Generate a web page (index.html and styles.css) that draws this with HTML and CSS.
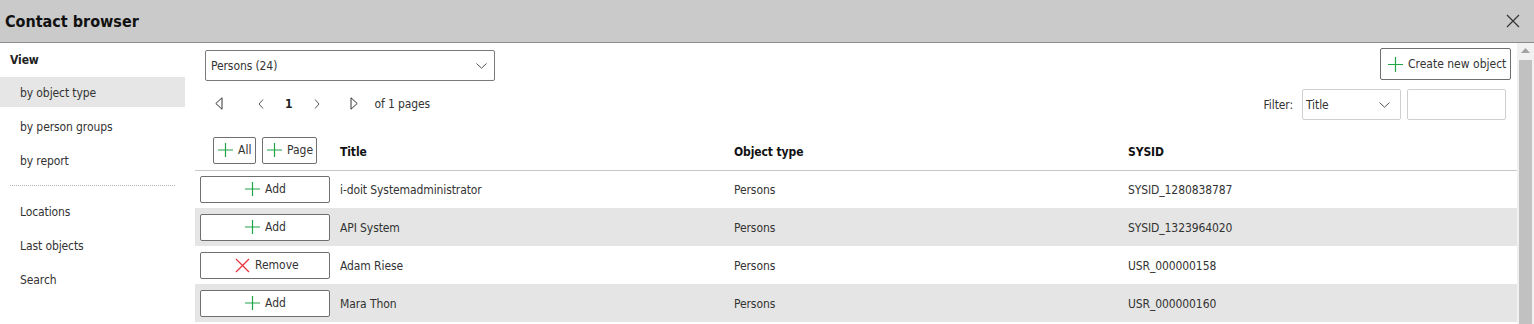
FILE: index.html
```html
<!DOCTYPE html>
<html lang="en">
<head>
<meta charset="utf-8">
<title>Contact browser</title>
<link rel="stylesheet" href="styles.css">
</head>
<body>
<div class="dialog">
  <header class="titlebar">
    <h1 class="title">Contact browser</h1>
    <span class="close">
      <svg width="14" height="14" viewBox="0 0 14 14"><path d="M1 1 L13 13 M13 1 L1 13" stroke="#333" stroke-width="1.2" fill="none"/></svg>
    </span>
  </header>
  <div class="content">
    <nav class="sidebar">
      <div class="side-head">View</div>
      <div class="side-item active">by object type</div>
      <div class="side-item">by person groups</div>
      <div class="side-item">by report</div>
      <div class="side-sep"></div>
      <div class="side-item">Locations</div>
      <div class="side-item">Last objects</div>
      <div class="side-item">Search</div>
    </nav>
    <main class="main">
      <div class="toolbar">
        <div class="select type-select">
          <span>Persons (24)</span>
          <svg class="chev" width="11" height="6" viewBox="0 0 11 6"><path d="M0.5 0.5 L5.5 5.2 L10.5 0.5" stroke="#555" stroke-width="1" fill="none"/></svg>
        </div>
        <button class="btn create-btn">
          <svg class="plus" width="15" height="15" viewBox="0 0 15 15"><path d="M7.5 0 V15 M0 7.5 H15" stroke="#1ea446" stroke-width="1.2"/></svg>
          <span>Create new object</span>
        </button>
      </div>
      <div class="pager-row">
        <div class="pager">
          <svg class="pg-first" width="8" height="13" viewBox="0 0 8 13"><path d="M7 0.8 V12.2 L0.8 6.5 Z" stroke="#333" stroke-width="1" fill="none"/></svg>
          <svg class="pg-prev" width="6" height="10" viewBox="0 0 6 10"><path d="M5 0.5 L1 5 L5 9.5" stroke="#555" stroke-width="1" fill="none"/></svg>
          <span class="pg-num">1</span>
          <svg class="pg-next" width="6" height="10" viewBox="0 0 6 10"><path d="M1 0.5 L5 5 L1 9.5" stroke="#555" stroke-width="1" fill="none"/></svg>
          <svg class="pg-last" width="8" height="13" viewBox="0 0 8 13"><path d="M1 0.8 V12.2 L7.2 6.5 Z" stroke="#333" stroke-width="1" fill="none"/></svg>
          <span class="pg-text">of 1 pages</span>
        </div>
        <div class="filter">
          <span class="filter-label">Filter:</span>
          <div class="select filter-select">
            <span>Title</span>
            <svg class="chev" width="11" height="6" viewBox="0 0 11 6"><path d="M0.5 0.5 L5.5 5.2 L10.5 0.5" stroke="#555" stroke-width="1" fill="none"/></svg>
          </div>
          <div class="input filter-input"></div>
        </div>
      </div>
      <table class="grid">
        <colgroup><col class="c-act"><col><col><col></colgroup>
        <thead>
          <tr>
            <th class="act-head">
              <div class="head-btns">
                <button class="btn small-btn btn-all"><svg class="plus" width="15" height="14" viewBox="0 0 15 14"><path d="M7.5 0 V14 M0 7 H15" stroke="#1ea446" stroke-width="1.2"/></svg><span>All</span></button>
                <button class="btn small-btn btn-page"><svg class="plus" width="15" height="14" viewBox="0 0 15 14"><path d="M7.5 0 V14 M0 7 H15" stroke="#1ea446" stroke-width="1.2"/></svg><span>Page</span></button>
              </div>
            </th>
            <th>Title</th>
            <th>Object type</th>
            <th>SYSID</th>
          </tr>
        </thead>
        <tbody>
          <tr>
            <td class="act"><button class="btn row-btn"><svg class="plus" width="15" height="14" viewBox="0 0 15 14"><path d="M7.5 0 V14 M0 7 H15" stroke="#1ea446" stroke-width="1.2"/></svg><span>Add</span></button></td>
            <td>i-doit Systemadministrator</td>
            <td>Persons</td>
            <td>SYSID_1280838787</td>
          </tr>
          <tr class="alt">
            <td class="act"><button class="btn row-btn"><svg class="plus" width="15" height="14" viewBox="0 0 15 14"><path d="M7.5 0 V14 M0 7 H15" stroke="#1ea446" stroke-width="1.2"/></svg><span>Add</span></button></td>
            <td>API System</td>
            <td>Persons</td>
            <td>SYSID_1323964020</td>
          </tr>
          <tr>
            <td class="act"><button class="btn row-btn remove-btn"><svg class="cross" width="15" height="15" viewBox="0 0 15 15"><path d="M1 1 L14 14 M14 1 L1 14" stroke="#e8303a" stroke-width="1.2"/></svg><span>Remove</span></button></td>
            <td>Adam Riese</td>
            <td>Persons</td>
            <td>USR_000000158</td>
          </tr>
          <tr class="alt">
            <td class="act"><button class="btn row-btn"><svg class="plus" width="15" height="14" viewBox="0 0 15 14"><path d="M7.5 0 V14 M0 7 H15" stroke="#1ea446" stroke-width="1.2"/></svg><span>Add</span></button></td>
            <td>Mara Thon</td>
            <td>Persons</td>
            <td>USR_000000160</td>
          </tr>
        </tbody>
      </table>
    </main>
    <div class="scrollbar">
      <svg class="sb-up" width="9" height="5" viewBox="0 0 9 5"><path d="M0 5 L4.5 0 L9 5 Z" fill="#a3a3a3"/></svg>
      <div class="sb-thumb"></div>
    </div>
  </div>
</div>
</body>
</html>
```
FILE: styles.css
```css
* { box-sizing: border-box; }
html, body { margin: 0; padding: 0; }
body {
  width: 1534px;
  height: 324px;
  overflow: hidden;
  background: #fff;
  font-family: "DejaVu Sans Condensed", "DejaVu Sans", sans-serif;
  font-size: 12px;
  letter-spacing: -0.1px;
  color: #333;
}
.dialog { display: flex; flex-direction: column; height: 324px; }

.titlebar {
  height: 43px;
  flex: none;
  background: #c9cac9;
  border-bottom: 1px solid #8c8c8c;
  display: flex;
  align-items: center;
  justify-content: space-between;
  padding: 0 14px 0 5px;
}
.title {
  margin: 0;
  font-size: 16px;
  font-weight: bold;
  letter-spacing: 0;
  color: #111;
}
.close { display: flex; width: 14px; height: 14px; }

.content { flex: 1; display: flex; overflow: hidden; }

.sidebar { width: 185px; flex: none; padding-top: 9px; }
.side-head {
  padding-left: 10px;
  line-height: 17px;
  font-weight: bold;
  color: #222;
  margin-bottom: 8px;
}
.side-item {
  height: 30px;
  line-height: 32px;
  overflow: hidden;
  padding-left: 20px;
  margin-bottom: 4px;
}
.side-item.active { background: #e5e6e5; }
.side-sep {
  margin: 10px 10px 10px;
  border-top: 1px dotted #b5b5b5;
}

.main { flex: 1; margin-left: 10px; display: flex; flex-direction: column; min-width: 0; }

.toolbar {
  display: flex;
  justify-content: space-between;
  align-items: flex-start;
  padding: 5px 6px 0 10px;
}
.select {
  display: flex;
  align-items: center;
  justify-content: space-between;
  border: 1px solid #7a7a7a;
  border-radius: 2px;
  background: #fff;
}
.type-select { width: 290px; height: 31px; margin-top: 2px; padding: 0 7px 0 5px; }
.chev { display: block; }

.btn {
  display: inline-flex;
  align-items: center;
  justify-content: flex-start;
  gap: 5px;
  font: inherit;
  font-weight: normal;
  color: #333;
  background: #fff;
  border: 1px solid #6f6f6f;
  border-radius: 2px;
  padding: 0;
  cursor: pointer;
}
.btn svg { display: block; flex: none; }
.create-btn { width: 131px; height: 32px; padding-left: 7px; }

.pager-row {
  display: flex;
  justify-content: space-between;
  align-items: center;
  margin-top: 8px;
  height: 31px;
  padding: 0 11px 0 20px;
}
.pager { display: flex; align-items: center; margin-top: -2px; }
.pager svg { display: block; }
.pg-prev { margin-left: 35px; }
.pg-num { margin-left: 21px; font-weight: bold; color: #222; }
.pg-next { margin-left: 22px; }
.pg-last { margin-left: 30px; }
.pg-text { margin-left: 16px; }

.filter { display: flex; align-items: center; }
.filter-label { margin-right: 9px; }
.filter-select {
  width: 99px;
  height: 31px;
  border-color: #cfcfcf;
  padding: 0 10px 0 3px;
}
.filter-input {
  width: 99px;
  height: 31px;
  margin-left: 6px;
  border: 1px solid #cfcfcf;
  border-radius: 2px;
}

.grid {
  margin-top: 13px;
  width: 100%;
  border-collapse: collapse;
  table-layout: fixed;
}
.c-act { width: 140px; }
.grid th {
  height: 37px;
  text-align: left;
  font-weight: bold;
  color: #111;
  padding: 2px 5px 0;
  border-bottom: 1px solid #c8c8c8;
}
.grid th.act-head { padding: 0; }
.head-btns { display: flex; justify-content: center; gap: 6px; margin-top: -2px; }
.small-btn { height: 27px; gap: 5px; padding-left: 4px; }
.btn-all { width: 43px; }
.btn-page { width: 55px; }
.grid td {
  height: 38px;
  padding: 2px 5px 0;
}
.grid td.act { padding: 0 5px; }
.grid tr.alt td { background: #e4e5e4; }
.row-btn { width: 130px; height: 27px; padding-left: 44px; }
.row-btn.remove-btn { padding-left: 34px; }

.scrollbar {
  width: 17px;
  flex: none;
  background: #f1f1f1;
  display: flex;
  flex-direction: column;
  align-items: center;
}
.sb-up { display: block; margin-top: 5px; }
.sb-thumb {
  margin-top: 7px;
  width: 13px;
  flex: 1;
  background: #c1c1c1;
}
```
